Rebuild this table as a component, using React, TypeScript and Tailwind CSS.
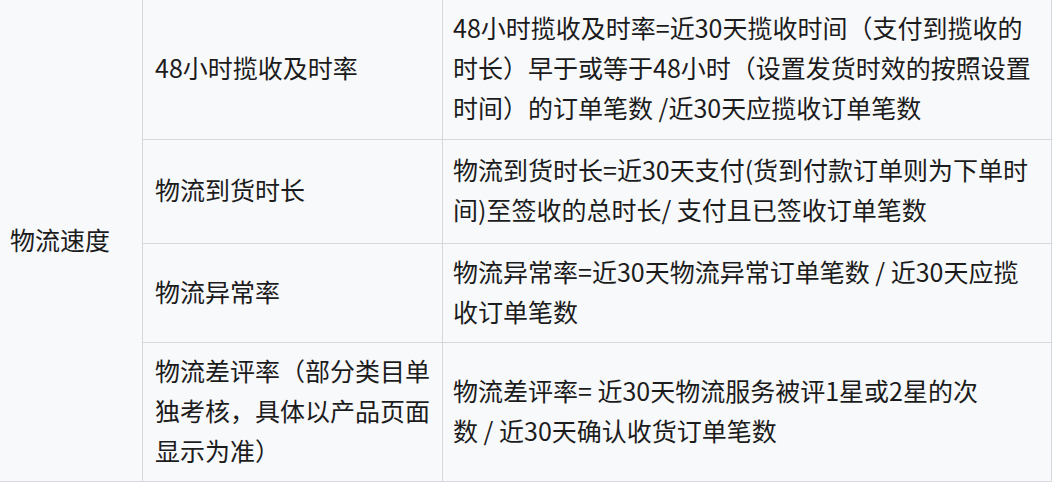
import React from 'react';

type Row = {
  height: string;
  name: string[];
  formula: string[];
};

const rows: Row[] = [
  {
    height: 'h-[140px]',
    name: ['48小时揽收及时率'],
    formula: [
      '48小时揽收及时率=近30天揽收时间（支付到揽收的',
      '时长）早于或等于48小时（设置发货时效的按照设置',
      '时间）的订单笔数 /近30天应揽收订单笔数',
    ],
  },
  {
    height: 'h-[104px]',
    name: ['物流到货时长'],
    formula: ['物流到货时长=近30天支付(货到付款订单则为下单时', '间)至签收的总时长/ 支付且已签收订单笔数'],
  },
  {
    height: 'h-[99px]',
    name: ['物流异常率'],
    formula: ['物流异常率=近30天物流异常订单笔数 / 近30天应揽', '收订单笔数'],
  },
  {
    height: 'h-[138px]',
    name: ['物流差评率（部分类目单', '独考核，具体以产品页面', '显示为准）'],
    formula: ['物流差评率= 近30天物流服务被评1星或2星的次', '数 / 近30天确认收货订单笔数'],
  },
];

const Lines: React.FC<{ lines: string[] }> = ({ lines }) => (
  <div className="whitespace-nowrap">
    {lines.map((l, i) => (
      <div key={i}>{l}</div>
    ))}
  </div>
);

const App: React.FC = () => {
  return (
    <div
      className="w-[1053px] h-[482px] bg-white text-[25px] leading-[40px] text-[#1c1c1c]"
      style={{ fontFamily: '"Noto Sans CJK SC", "Noto Sans", sans-serif' }}
    >
      <div className="flex w-[1052px] bg-[#f8f9fb] border-b border-[#d6d8dd]">
        <div className="w-[143px] shrink-0 flex items-center pl-[10px] pb-[4px] border-r border-[#d6d8dd]">
          物流速度
        </div>
        <div className="flex-1 flex flex-col border-r border-[#d6d8dd]">
          {rows.map((r, i) => (
            <div
              key={i}
              className={`flex ${r.height} ${i < rows.length - 1 ? 'border-b border-[#d6d8dd]' : ''}`}
            >
              <div className="w-[300px] shrink-0 flex items-center pl-[12px] pb-[5px] border-r border-[#d6d8dd]">
                <Lines lines={r.name} />
              </div>
              <div className="flex-1 flex items-center pl-[10px] pb-[5px]">
                <Lines lines={r.formula} />
              </div>
            </div>
          ))}
        </div>
      </div>
    </div>
  );
};

export default App;
